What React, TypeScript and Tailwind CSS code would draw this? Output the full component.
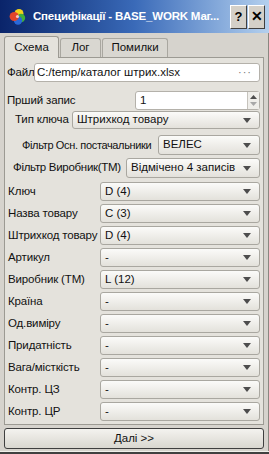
import React from 'react';

const font = "font-['Liberation_Sans',Arial,sans-serif]";

function Arrow() {
  return (
    <svg width="8" height="5" viewBox="0 0 8 5" className="shrink-0">
      <polygon points="0,0 8,0 4,5" fill="#4d4d4d" />
    </svg>
  );
}

function Combo({ text, className = '' }: { text: string; className?: string }) {
  return (
    <div
      className={`flex shrink-0 items-center justify-between rounded-[3px] border border-[#a9a7a0] bg-gradient-to-b from-[#fbfbf9] to-[#e3e1db] pl-[4px] pr-[8px] text-[11.5px] text-[#111] ${className}`}
    >
      <span className="whitespace-nowrap">{text}</span>
      <Arrow />
    </div>
  );
}

function Row({ label, value }: { label: string; value: string }) {
  return (
    <div className="mt-[3px] flex h-[19px] items-center">
      <span className="min-w-0 flex-1 whitespace-nowrap pl-[1px] text-[11.5px] tracking-[-0.15px] text-[#111]">{label}</span>
      <Combo text={value} className="h-[19px] w-[160px]" />
    </div>
  );
}

function Ball() {
  return (
    <svg width="17" height="17" viewBox="0 0 17 17" className="shrink-0">
      <circle cx="10" cy="5.5" r="4.5" fill="#f2d21a" />
      <circle cx="12" cy="10" r="4.2" fill="#3fae3a" />
      <circle cx="9" cy="12.5" r="4.2" fill="#2a68d8" />
      <circle cx="5.2" cy="8.5" r="4.6" fill="#e0452a" />
      <circle cx="8.5" cy="8.5" r="1.6" fill="#ffffff" opacity="0.7" />
    </svg>
  );
}

export default function App() {
  const rows: [string, string][] = [
    ['Назва товару', 'C (3)'],
    ['Штрихкод товару', 'D (4)'],
    ['Артикул', '-'],
    ['Виробник (ТМ)', 'L (12)'],
    ['Країна', '-'],
    ['Од.виміру', '-'],
    ['Придатність', '-'],
    ['Вага/місткість', '-'],
    ['Контр. ЦЗ', '-'],
    ['Контр. ЦР', '-'],
  ];

  return (
    <div className={`${font} flex h-[454px] w-[269px] flex-col overflow-hidden bg-[#d6d3cd]`}>
      {/* title bar */}
      <div className="flex h-[33px] shrink-0 items-center bg-gradient-to-r from-[#0a246a] via-[#3a6ab8] to-[#b4d0ee] pl-[9px] pr-[4px]">
        <Ball />
        <span className="ml-[7px] mr-[2px] min-w-0 flex-1 overflow-hidden whitespace-nowrap text-[11.5px] font-bold tracking-[-0.2px] text-white">
          Специфікації - BASE_WORK Маг...
        </span>
        <div className="flex shrink-0 gap-[1px]">
          <div className="flex h-[24px] w-[17px] items-center justify-center border border-b-[#404040] border-l-white border-r-[#404040] border-t-white bg-[#d4d0c8] text-[13px] font-bold text-black">
            ?
          </div>
          <div className="flex h-[24px] w-[17px] items-center justify-center border border-b-[#404040] border-l-white border-r-[#404040] border-t-white bg-[#d4d0c8] text-[14px] font-bold text-black">
            ✕
          </div>
        </div>
      </div>

      <div className="flex flex-1 flex-col border-r border-r-[#8a8780] pl-[4px] pr-[4px]">
        {/* tabs */}
        <div className="mt-[3px] flex h-[21px] items-end text-[11.5px] text-[#111]">
          <div className="relative z-10 -mb-[1px] flex h-[22px] w-[55px] items-center justify-center rounded-t-[3px] border border-b-0 border-[#9c9a93] bg-[#e4e2dc]">
            Схема
          </div>
          <div className="ml-[1px] flex h-[19px] w-[41px] items-center justify-center rounded-t-[3px] border border-b-0 border-[#a9a7a0] bg-[#d9d7d1]">
            Лог
          </div>
          <div className="ml-[1px] flex h-[19px] w-[66px] items-center justify-center rounded-t-[3px] border border-b-0 border-[#a9a7a0] bg-[#d9d7d1]">
            Помилки
          </div>
        </div>

        {/* pane */}
        <div className="flex h-[368px] flex-col border border-[#9c9a93] bg-[#e4e2dc] pl-[2px] pr-[3px]">
          <div className="mt-[5px] flex h-[19px] items-center">
            <span className="w-[27px] shrink-0 text-[11.5px] tracking-[-0.15px] text-[#111]">Файл</span>
            <div className="flex h-[19px] flex-1 items-center justify-between rounded-[3px] border border-[#b4b1aa] bg-white pl-[2px] pr-[7px] text-[11.5px] text-[#111]">
              <span className="whitespace-nowrap">C:/temp/каталог штрих.xlsx</span>
              <span className="text-[11px] tracking-[1px] text-[#777]">···</span>
            </div>
          </div>

          <div className="mt-[9px] flex h-[19px] items-center">
            <span className="whitespace-nowrap text-[11.5px] tracking-[-0.15px] text-[#111]">Прший запис</span>
            <div className="ml-auto flex h-[19px] w-[125px] shrink-0 items-stretch rounded-[3px] border border-[#b4b1aa] bg-white text-[11.5px] text-[#111]">
              <span className="flex flex-1 items-center pl-[4px]">1</span>
              <div className="flex w-[12px] flex-col items-center justify-center gap-[3px] border-l border-[#c6c3bc] bg-[#efeeea]">
                <svg width="7" height="4" viewBox="0 0 7 4">
                  <polygon points="0,4 7,4 3.5,0" fill="#4d4d4d" />
                </svg>
                <svg width="7" height="4" viewBox="0 0 7 4">
                  <polygon points="0,0 7,0 3.5,4" fill="#a8a8a8" />
                </svg>
              </div>
            </div>
          </div>

          <div className="mt-[1px] flex h-[18px] items-center">
            <span className="ml-[8px] whitespace-nowrap text-[11.5px] tracking-[-0.15px] text-[#111]">Тип ключа</span>
            <Combo text="Штрихкод товару" className="ml-auto h-[18px] w-[188px]" />
          </div>

          <div className="mt-[6px] flex h-[20px] items-center">
            <span className="ml-[15px] min-w-0 flex-1 whitespace-nowrap text-[11px] tracking-[-0.35px] text-[#111]">Фільтр Осн. постачальники</span>
            <Combo text="ВЕЛЕС" className="h-[20px] w-[102px]" />
          </div>

          <div className="mt-[3px] flex h-[20px] items-center">
            <span className="ml-[6px] min-w-0 flex-1 whitespace-nowrap text-[11.5px] tracking-[-0.3px] text-[#111]">Фільтр Виробник(ТМ)</span>
            <Combo text="Відмічено 4 записів" className="h-[20px] w-[134px]" />
          </div>

          <div className="mt-[4px] flex h-[19px] items-center">
            <span className="min-w-0 flex-1 pl-[1px] text-[11.5px] text-[#111]">Ключ</span>
            <Combo text="D (4)" className="h-[19px] w-[160px]" />
          </div>

          {rows.map(([l, v]) => (
            <Row key={l} label={l} value={v} />
          ))}
        </div>

        {/* next button */}
        <div className="mt-[3px] flex h-[21px] items-center justify-center rounded-[3px] border border-[#3f3f3f] bg-gradient-to-b from-[#f4f3ef] to-[#d9d7d0] text-[11.5px] text-[#111]">
          Далі &gt;&gt;
        </div>
        <div className="flex-1" />
      </div>
      <div className="h-[3px] shrink-0 border-t border-[#f0efea] bg-[#404040]" />
    </div>
  );
}
